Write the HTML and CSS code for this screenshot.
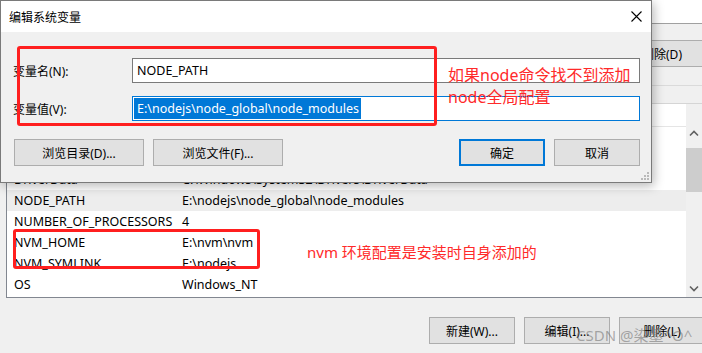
FILE: index.html
```html
<!DOCTYPE html>
<html lang="zh-CN">
<head>
    <meta charset="UTF-8">
    <meta name="viewport" content="width=device-width, initial-scale=1.0">
    <title>编辑系统变量</title>
    <link rel="stylesheet" href="styles.css">
</head>
<body>
    <div class="window">
        <div class="title-strip"></div>
        <div class="toolbar">
            <button class="btn">新建(N)...</button>
            <button class="btn">编辑(I)...</button>
            <button class="btn">删除(D)</button>
        </div>
        <div class="rule"></div>

        <div class="list">
            <div class="list-body">
                <div class="list-head"><span>变量</span><span>值</span></div>
                <div class="row"><span>ComSpec</span><span>C:\Windows\system32\cmd.exe</span></div>
                <div class="row"><span>configsetroot</span><span>C:\Windows\ConfigSetRoot</span></div>
                <div class="row"><span>DriverData</span><span>C:\Windows\System32\Drivers\DriverData</span></div>
                <div class="row selected"><span>NODE_PATH</span><span>E:\nodejs\node_global\node_modules</span></div>
                <div class="row"><span>NUMBER_OF_PROCESSORS</span><span>4</span></div>
                <div class="row"><span>NVM_HOME</span><span>E:\nvm\nvm</span></div>
                <div class="row"><span>NVM_SYMLINK</span><span>E:\nodejs</span></div>
                <div class="row"><span>OS</span><span>Windows_NT</span></div>
            </div>
            <div class="scrollbar">
                <svg class="arrow" width="16" height="17" viewBox="0 0 16 17"><path d="M4 10.5 L8 6.5 L12 10.5" fill="none" stroke="#606060" stroke-width="1.6"/></svg>
                <div class="thumb"></div>
                <div class="track"></div>
                <svg class="arrow" width="16" height="17" viewBox="0 0 16 17"><path d="M4 6.5 L8 10.5 L12 6.5" fill="none" stroke="#606060" stroke-width="1.6"/></svg>
            </div>
        </div>

        <div class="actions">
            <button class="btn">新建(W)...</button>
            <button class="btn">编辑(I)...</button>
            <button class="btn">删除(L)</button>
        </div>
    </div>

    <div class="dialog">
        <div class="dialog-title">
            <span>编辑系统变量</span>
            <svg width="11" height="11" viewBox="0 0 11 11"><path d="M0.5 0.5 L10.5 10.5 M10.5 0.5 L0.5 10.5" stroke="#000" stroke-width="1.1"/></svg>
        </div>
        <div class="dialog-body">
            <div class="field">
                <label>变量名(N):</label>
                <div class="input">NODE_PATH</div>
            </div>
            <div class="field">
                <label>变量值(V):</label>
                <div class="input focused"><span class="sel">E:\nodejs\node_global\node_modules</span></div>
            </div>
            <div class="dialog-buttons">
                <div class="group">
                    <button class="btn wide">浏览目录(D)...</button>
                    <button class="btn wide">浏览文件(F)...</button>
                </div>
                <div class="group">
                    <button class="btn default">确定</button>
                    <button class="btn">取消</button>
                </div>
            </div>
            <svg class="grip" width="9" height="9" viewBox="0 0 9 9" fill="#b9b9b9">
                <rect x="6" y="0" width="2" height="2"/>
                <rect x="3" y="3" width="2" height="2"/><rect x="6" y="3" width="2" height="2"/>
                <rect x="0" y="6" width="2" height="2"/><rect x="3" y="6" width="2" height="2"/><rect x="6" y="6" width="2" height="2"/>
            </svg>
        </div>
    </div>

    <!-- annotations drawn over the screenshot -->
    <div class="mark mark-dialog"></div>
    <p class="note note-top">如果node命令找不到添加<br>node全局配置</p>
    <div class="mark mark-nvm"></div>
    <p class="note note-nvm">nvm 环境配置是安装时自身添加的</p>
    <span class="watermark">CSDN @染墨^O^</span>
</body>
</html>
```

FILE: styles.css
```css
body {
    margin: 0;
    width: 702px;
    height: 353px;
    overflow: hidden;
    position: relative;
    background: #f0f0f0;
    font-family: "Noto Sans", "Noto Sans CJK SC", sans-serif;
    font-size: 12.5px;
    color: #000;
}
.btn {
    font-family: "Noto Sans", "Noto Sans CJK SC", sans-serif;
    font-size: 12px;
    color: #000;
    background: #e1e1e1;
    border: 1px solid #adadad;
    height: 27px;
    width: 86px;
    padding: 0;
    flex-shrink: 0;
}

/* window behind the dialog */
.window {
    display: flex;
    flex-direction: column;
}
.title-strip {
    height: 23px;
    background: #fff;
    border-bottom: 1px solid #a0a0a0;
}
.toolbar, .actions {
    display: flex;
    gap: 9px;
    padding-left: 429px;
}
.toolbar {
    margin-top: 16px;
}
.rule {
    margin-top: 18px;
    height: 1px;
    background: #dadada;
}
.list {
    margin-top: 17px;
    margin-left: 6px;
    height: 193px;
    border-top: 1px solid #d5d5d5;
    border-left: 1px solid #828790;
    border-bottom: 1px solid #828790;
    background: #fff;
    display: flex;
}
.list-body {
    flex: 1;
}
.list-head {
    height: 22px;
    border-bottom: 1px solid #e5e5e5;
}
.row, .list-head {
    display: grid;
    grid-template-columns: 168px 1fr;
    align-items: center;
    padding-left: 7px;
    white-space: nowrap;
}
.row {
    height: 21px;
}
.row.selected {
    background: #ededed;
}
.scrollbar {
    width: 16px;
    background: #f0f0f0;
    display: flex;
    flex-direction: column;
    padding-top: 21px;
}
.arrow {
    display: block;
}
.thumb {
    margin-top: 6px;
    height: 44px;
    background: #cdcdcd;
}
.track {
    flex: 1;
}
.actions {
    margin-top: 19px;
}

/* dialog */
.dialog {
    position: absolute;
    left: 0;
    top: 0;
    width: 650px;
    border: 1px solid #7a7a7a;
    box-shadow: 2px 3px 10px rgba(0, 0, 0, 0.28);
    background: #f0f0f0;
}
.dialog-title {
    height: 31px;
    background: #fff;
    display: flex;
    align-items: center;
    justify-content: space-between;
    padding: 0 9px 0 8px;
}
.dialog-title span {
    font-family: "Noto Sans CJK SC", sans-serif;
    font-size: 12px;
}
.dialog-body {
    position: relative;
    padding: 26px 11px 16px 12px;
    display: flex;
    flex-direction: column;
    gap: 13px;
}
.field {
    display: flex;
    align-items: center;
}
.field label {
    width: 119px;
    font-size: 12px;
}
.input {
    flex: 1;
    height: 23px;
    border: 1px solid #7a7a7a;
    background: #fff;
    display: flex;
    align-items: center;
    padding-left: 4px;
    white-space: nowrap;
}
.input.focused {
    border-color: #0078d7;
    padding-left: 1px;
}
.sel {
    background: #0078d7;
    color: #fff;
    padding: 2px 2px 2px 3px;
}
.dialog-buttons {
    margin-top: 5px;
    display: flex;
    justify-content: space-between;
    padding-left: 1px;
}
.group {
    display: flex;
    gap: 9px;
}
.btn.wide {
    width: 130px;
}
.btn.default {
    border: 2px solid #0078d7;
}
.grip {
    position: absolute;
    right: 1px;
    bottom: 1px;
}

/* red annotations */
.mark {
    position: absolute;
    border: 3px solid #ff1f1f;
    border-radius: 3px;
}
.mark-dialog {
    left: 17px;
    top: 46px;
    width: 414px;
    height: 74px;
}
.mark-nvm {
    left: 13px;
    top: 229px;
    width: 241px;
    height: 34px;
}
.note {
    position: absolute;
    margin: 0;
    color: #ff2a2a;
    font-family: "Noto Sans", "Noto Sans CJK SC", sans-serif;
    white-space: nowrap;
}
.note-top {
    left: 448px;
    top: 64px;
    font-size: 16px;
    line-height: 22px;
}
.note-nvm {
    left: 307px;
    top: 242px;
    font-size: 15px;
    line-height: 20px;
}
.watermark {
    position: absolute;
    left: 576px;
    top: 325px;
    font-size: 15px;
    line-height: 20px;
    color: rgba(120, 120, 120, 0.6);
    white-space: nowrap;
}
```
